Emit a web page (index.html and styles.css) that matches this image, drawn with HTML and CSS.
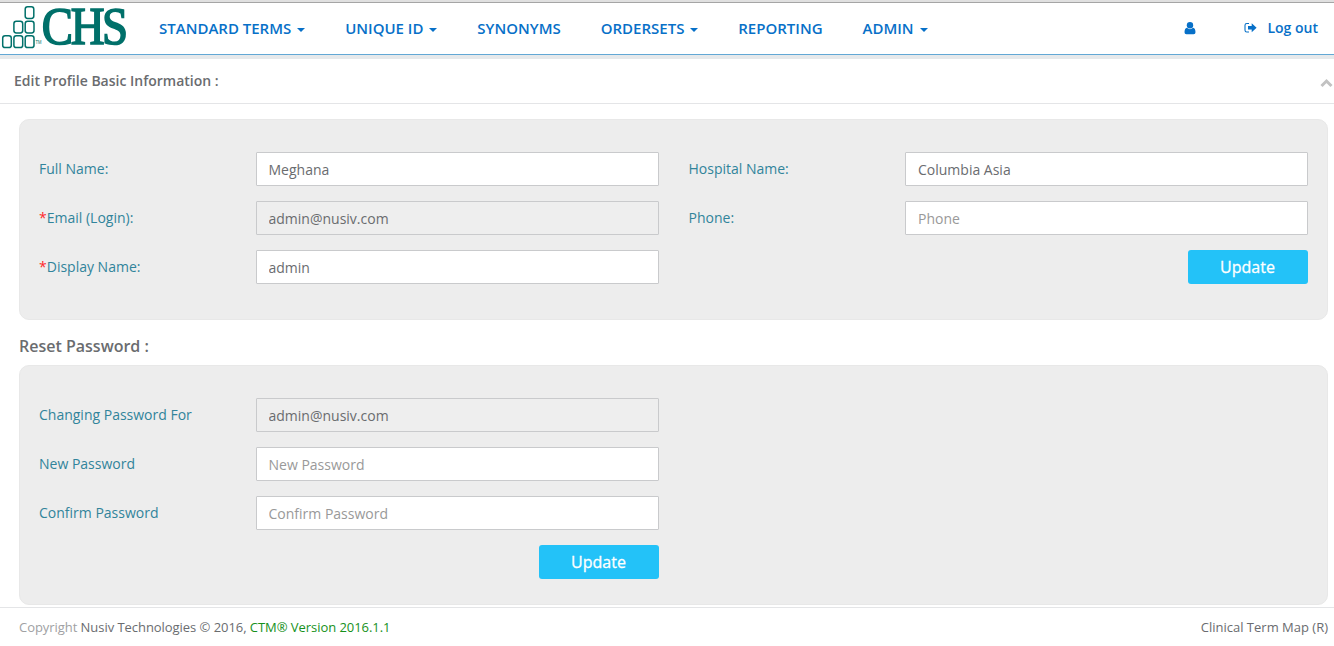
FILE: index.html
```html
<!DOCTYPE html>
<html lang="en">
<head>
<meta charset="utf-8">
<title>Edit Profile</title>
<link rel="stylesheet" href="styles.css">
</head>
<body>
<header class="navbar">
  <svg class="logo" width="130" height="51" viewBox="0 0 130 51" role="img" aria-label="CHS">
    <g fill="none" stroke="#00706a" stroke-width="1.5">
      <rect x="25.2" y="3.8" width="8.6" height="11.6" rx="2.4"/>
      <rect x="13.9" y="18.3" width="8.8" height="11.6" rx="2.4"/>
      <rect x="25.2" y="18.3" width="8.8" height="11.6" rx="2.4"/>
      <rect x="2.7" y="32.8" width="8.6" height="11.8" rx="2.4"/>
      <rect x="13.9" y="32.8" width="8.8" height="11.8" rx="2.4"/>
      <rect x="25.2" y="32.8" width="8.8" height="11.8" rx="2.4"/>
    </g>
    <text class="logo-tm" x="35.5" y="41" textLength="6" lengthAdjust="spacingAndGlyphs">TM</text>
    <text class="logo-name" transform="translate(41.8 41.4) scale(.9 1)">CHS</text>
  </svg>
  <nav class="menu">
    <a class="menu-item">STANDARD TERMS <i class="caret"></i></a>
    <a class="menu-item">UNIQUE ID <i class="caret"></i></a>
    <a class="menu-item">SYNONYMS</a>
    <a class="menu-item">ORDERSETS <i class="caret"></i></a>
    <a class="menu-item">REPORTING</a>
    <a class="menu-item">ADMIN <i class="caret"></i></a>
  </nav>
  <div class="account">
    <svg class="user" width="12" height="13" viewBox="0 0 12 13"><circle cx="6" cy="3.3" r="3.2"/><path d="M2.9 5.7Q6 8.6 9.1 5.7Q11.4 6.1 11.5 10.2Q11.5 12.3 9.6 12.3H2.4Q.5 12.3.5 10.2Q.6 6.1 2.9 5.7Z"/></svg>
    <svg class="exit" width="13" height="12" viewBox="0 0 13 12"><path d="M5 1.5H2.8Q1 1.5 1 3.3V8.2Q1 10 2.8 10H5" fill="none" stroke="currentColor" stroke-width="1.1"/><path d="M4 4H7.7V1.3L12.6 5.8L7.7 10.3V7.6H4Z"/></svg>
    <a class="logout">Log out</a>
  </div>
</header>
<section class="heading">
  <h1 class="title">Edit Profile Basic Information :</h1>
  <svg class="chevron" width="14" height="10" viewBox="0 0 14 10"><path d="M1.5 8L6.5 3L11.5 8" fill="none" stroke="#c2c2c2" stroke-width="3"/></svg>
</section>
<main class="content">
  <form class="panel profile">
    <label class="label" for="name">Full Name:</label>
    <input class="field left" id="name" value="Meghana">
    <label class="label second" for="hospital">Hospital Name:</label>
    <input class="field" id="hospital" value="Columbia Asia">
    <label class="label" for="email"><span class="required">*</span>Email (Login):</label>
    <input class="field left" id="email" value="admin@nusiv.com" disabled>
    <label class="label second" for="phone">Phone:</label>
    <input class="field" id="phone" placeholder="Phone">
    <label class="label" for="display"><span class="required">*</span>Display Name:</label>
    <input class="field left" id="display" value="admin">
    <button class="update last" type="button">Update</button>
  </form>
  <h2 class="subtitle">Reset Password :</h2>
  <form class="panel reset">
    <label class="label" for="account">Changing Password For</label>
    <input class="field left" id="account" value="admin@nusiv.com" disabled>
    <label class="label start" for="new">New Password</label>
    <input class="field left" id="new" placeholder="New Password">
    <label class="label start" for="confirm">Confirm Password</label>
    <input class="field left" id="confirm" placeholder="Confirm Password">
    <button class="update under" type="button">Update</button>
  </form>
</main>
<footer class="footer">
  <div class="copyright"><span class="muted">Copyright</span> Nusiv Technologies © 2016, <span class="version">CTM® Version 2016.1.1</span></div>
  <div>Clinical Term Map (R)</div>
</footer>
</body>
</html>
```
FILE: styles.css
```css
* { box-sizing: border-box; }
body {
  margin: 0;
  height: 646px;
  overflow: hidden;
  background: #fff;
  color: #6a6c6f;
  font: 14px/20px "Open Sans", sans-serif;
  border-top: 2px solid #e0e0e0;
}
.navbar {
  display: flex;
  height: 57px;
  border-top: 1px solid #a5a5a5;
  border-bottom: 4px solid #e6e9eb;
  box-shadow: inset 0 -1px #62a8d5;
  color: #0770c8;
}
.logo { flex: none; overflow: visible; }
.logo-name {
  font: 52px "Liberation Serif", serif;
  letter-spacing: -2.6px;
  fill: #00706a;
  stroke: #00706a;
  stroke-width: 1.7px;
}
.logo-tm { font: 6px "Liberation Sans", sans-serif; fill: #00706a; }
.menu {
  display: flex;
  gap: 40px;
  padding: 15px 0 0 29px;
  font-size: 15px;
  font-weight: 600;
  white-space: nowrap;
}
.caret {
  display: inline-block;
  margin-left: 2px;
  vertical-align: middle;
  border: 4px solid transparent;
  border-top-color: currentColor;
  border-bottom: 0;
}
.account {
  display: flex;
  margin-left: auto;
  padding: 15px 16px 0 0;
  font-weight: 600;
}
.account svg { fill: currentColor; }
.user { margin: 4px 48px 0 0; }
.exit { margin: 4px 10px 0 0; }
.heading {
  display: flex;
  justify-content: space-between;
  height: 45px;
  padding: 12px 0 0 14px;
  border-bottom: 1px solid #e4e5e7;
}
.title { margin: 0; font-size: 14px; font-weight: 600; line-height: 20px; }
.chevron { margin-top: 7px; }
.content { padding: 15px 6px 0 19px; }
.panel {
  display: grid;
  grid-template-columns: 217px 403px 246px 403px;
  grid-auto-rows: 34px;
  row-gap: 15px;
  padding: 32px 19px 0 19px;
  border: 1px solid #e8e8e8;
  border-radius: 10px;
  background: #ededed;
}
.profile { height: 201px; }
.reset { height: 240px; }
.label { padding-top: 7px; color: #31849b; }
.second { padding-left: 29.5px; }
.start { grid-column: 1; }
.required { color: #ff2a2a; }
.field {
  width: 100%;
  height: 34px;
  padding: 7px 12px 6px;
  border: 1px solid #c9cacc;
  border-radius: 1px;
  background: #fff;
  color: #6a6c6f;
  font: 14px/20px "Open Sans", sans-serif;
}
.left { padding-left: 11.5px; }
.field:disabled { background: #eee; }
.field::placeholder { color: #999; }
.update {
  justify-self: end;
  width: 120px;
  height: 34px;
  padding: 0 1px 0 0;
  border: 0;
  border-radius: 3px;
  background: #23c2f8;
  color: #fff;
  font: 16px/34px "Open Sans", sans-serif;
  -webkit-text-stroke: .3px #fff;
}
.last { grid-column: 4; }
.under { grid-column: 2; }
.subtitle { margin: 16px 0 9px; font-size: 16px; font-weight: 600; line-height: 20px; }
.footer {
  display: flex;
  justify-content: space-between;
  margin-top: 2px;
  padding: 9px 6px 0 19px;
  border-top: 1px solid #e4e5e7;
  font-size: 13px;
}
.copyright { letter-spacing: -.05px; }
.muted { color: #a0a1a3; }
.version { color: #16911b; }
```
